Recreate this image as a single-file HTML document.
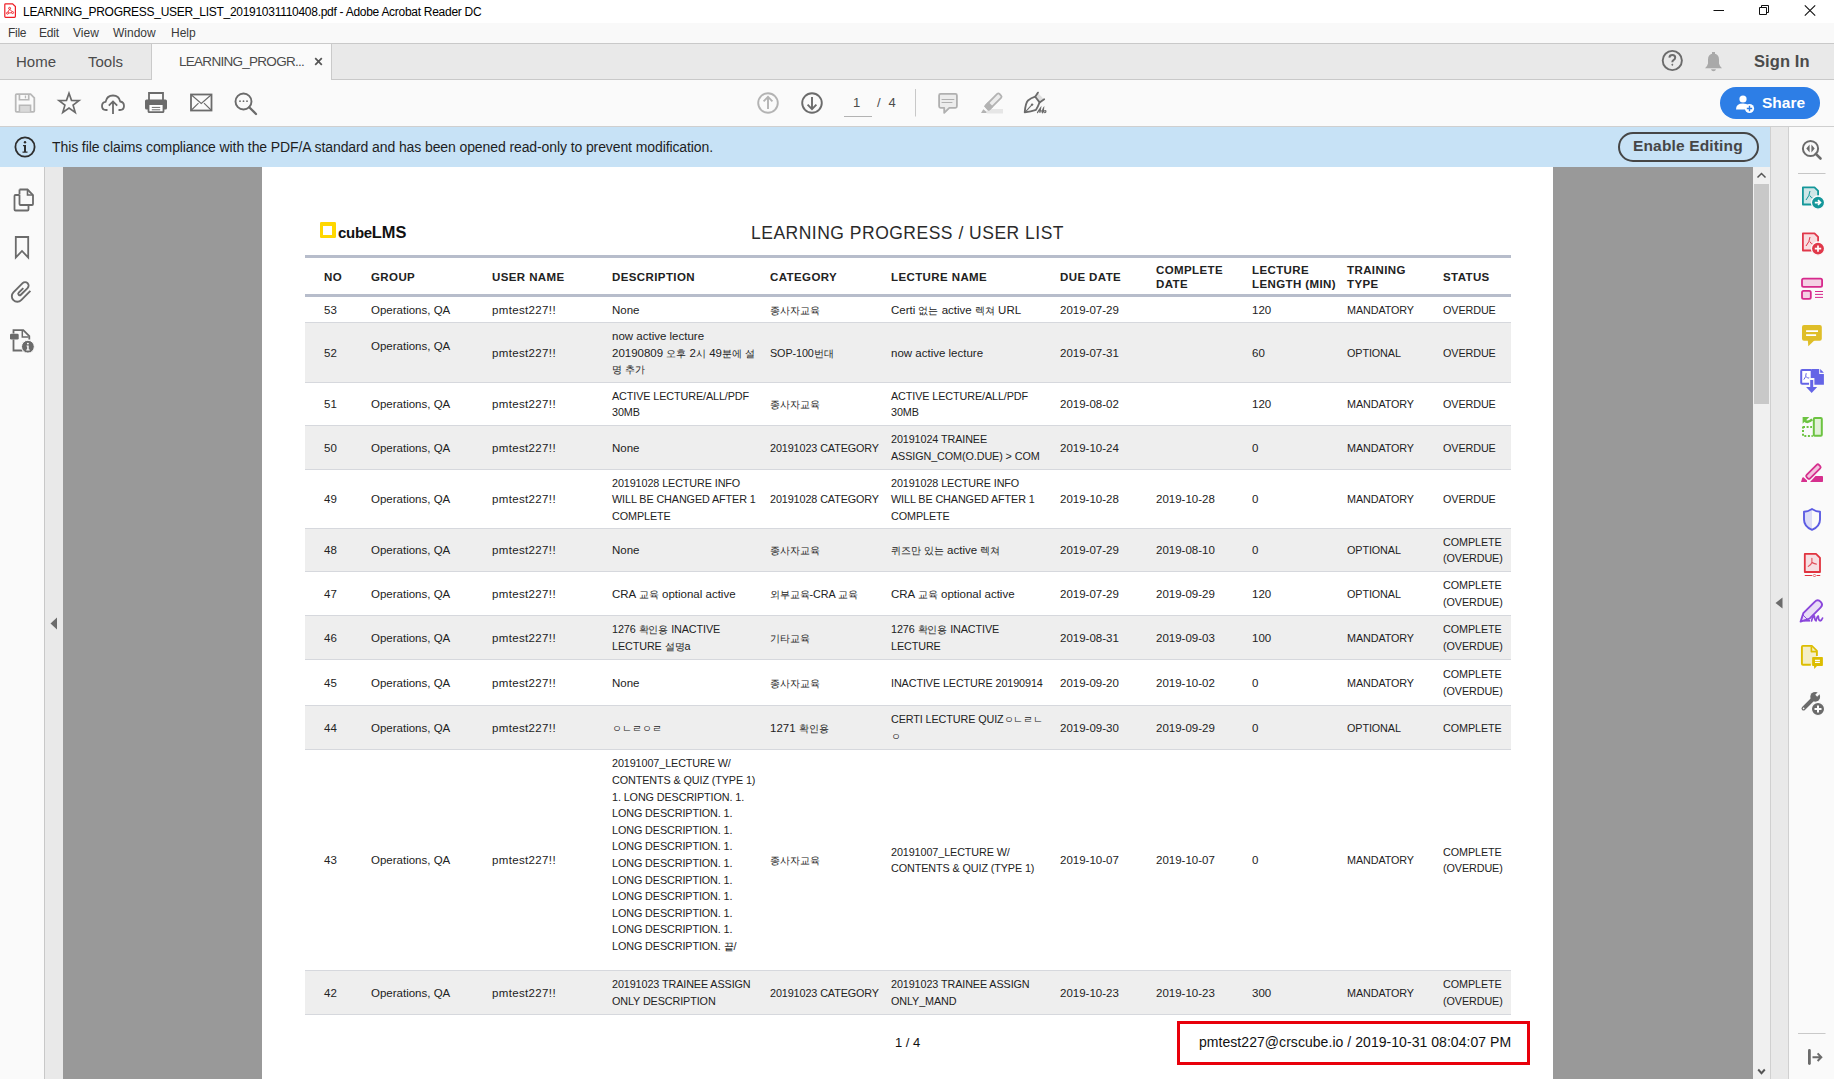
<!DOCTYPE html>
<html><head><meta charset="utf-8">
<style>
*{margin:0;padding:0;box-sizing:border-box}
html,body{width:1834px;height:1079px;overflow:hidden;background:#fafafa;font-family:"Liberation Sans",sans-serif;color:#222}
.abs{position:absolute}
#titlebar{left:0;top:0;width:1834px;height:23px;background:#fff}
#menubar{left:0;top:23px;width:1834px;height:20px;background:#f9f9f9}
#tabbar{left:0;top:43px;width:1834px;height:37px;background:#e9e9e9;border-top:1px solid #c9c9c9;border-bottom:1px solid #c9c9c9}
#toolbar{left:0;top:80px;width:1834px;height:47px;background:#fafafa;border-bottom:1px solid #cfcfcf}
#infobar{left:0;top:127px;width:1770px;height:40px;background:#c7e2f6}
#leftpanel{left:0;top:167px;width:45px;height:912px;background:#fafafa;border-right:1px solid #c8c8c8}
#leftstrip{left:45px;top:167px;width:18px;height:912px;background:#e9e9e9}
#docarea{left:63px;top:167px;width:1690px;height:912px;background:#999}
#page{left:262px;top:167px;width:1291px;height:912px;background:#fff}
#scroll{left:1753px;top:167px;width:17px;height:912px;background:#f0f0f0}
#rightstrip{left:1770px;top:127px;width:19px;height:952px;background:#e9e9e9;border-left:1px solid #d0d0d0;border-right:1px solid #d0d0d0}
#rightpanel{left:1789px;top:127px;width:45px;height:952px;background:#fafafa}
.t{position:absolute;white-space:nowrap}
.ico{position:absolute}
.h{position:absolute;white-space:nowrap;font-size:11.5px;font-weight:bold;color:#222;letter-spacing:0.4px;line-height:14px}
.row{position:absolute;left:305px;width:1206px}
.rl{position:absolute;left:305px;width:1206px;height:1px;background:#d6d8dd}
.c{position:absolute;white-space:nowrap;font-size:11.5px;color:#222;line-height:16.6px}
.u{font-size:10.8px;letter-spacing:-0.1px}
.k{font-size:10.4px;font-weight:500;line-height:1}
.un{letter-spacing:0.35px}
</style></head><body>
<div id="titlebar" class="abs"></div>
<div id="menubar" class="abs"></div>
<div id="tabbar" class="abs"></div>
<div id="toolbar" class="abs"></div>
<div id="infobar" class="abs"></div>
<div id="leftpanel" class="abs"></div>
<div id="leftstrip" class="abs"></div>
<div id="docarea" class="abs"></div>
<div id="page" class="abs"></div>
<div id="scroll" class="abs"></div>
<div id="rightstrip" class="abs"></div>
<div id="rightpanel" class="abs"></div>

<!-- title bar -->
<svg class="ico" style="left:3px;top:2px" width="15" height="18" viewBox="0 0 15 18">
 <path d="M2.6 1.8 H9.6 L12.4 4.6 V14.3 Q12.4 15.3 11.4 15.3 H2.6 Q1.8 15.3 1.8 14.5 V2.6 Q1.8 1.8 2.6 1.8 Z" fill="#fff" stroke="#ee1c24" stroke-width="1.2"/>
 <circle cx="6.6" cy="6.3" r="1" fill="none" stroke="#ee1c24" stroke-width="0.9"/>
 <circle cx="4.5" cy="11.2" r="1" fill="none" stroke="#ee1c24" stroke-width="0.9"/>
 <circle cx="9.6" cy="10.6" r="1" fill="none" stroke="#ee1c24" stroke-width="0.9"/>
 <path d="M6.5 7.3 L4.9 10.2 M6.9 7.3 L9 9.7 M5.5 11 L8.6 10.7" stroke="#ee1c24" stroke-width="0.9"/>
</svg>
<div class="t" style="left:23px;top:5px;font-size:12px;color:#000;letter-spacing:-0.28px">LEARNING_PROGRESS_USER_LIST_20191031110408.pdf - Adobe Acrobat Reader DC</div>
<svg class="ico" style="left:1700px;top:0" width="134" height="22" viewBox="0 0 134 22">
 <path d="M13.5 10.5 H24" stroke="#111" stroke-width="1"/>
 <path d="M59.5 7.5 H66.5 V14.5 H59.5 Z M61.5 7.5 V5.5 H68.5 V12.5 H66.5" fill="none" stroke="#111" stroke-width="1"/>
 <path d="M104.8 5.3 L115.2 15.7 M115.2 5.3 L104.8 15.7" stroke="#111" stroke-width="1.1"/>
</svg>
<!-- menu -->
<div class="t" style="left:8px;top:26px;font-size:12px;color:#3a3a3a;letter-spacing:-0.3px">File</div>
<div class="t" style="left:39px;top:26px;font-size:12px;color:#3a3a3a;letter-spacing:-0.2px">Edit</div>
<div class="t" style="left:73px;top:26px;font-size:12px;color:#3a3a3a">View</div>
<div class="t" style="left:113px;top:26px;font-size:12px;color:#3a3a3a">Window</div>
<div class="t" style="left:171px;top:26px;font-size:12px;color:#3a3a3a">Help</div>
<!-- tabs -->
<div class="t" style="left:16px;top:53px;font-size:15px;color:#4b4b4b">Home</div>
<div class="t" style="left:88px;top:53px;font-size:15px;color:#4b4b4b">Tools</div>
<div class="abs" style="left:151px;top:43px;width:181px;height:37px;background:#fafafa;border-left:1px solid #cacaca;border-right:1px solid #cacaca;border-top:1px solid #cacaca"></div>
<div class="t" style="left:179px;top:54px;font-size:13.5px;color:#4b4b4b;letter-spacing:-0.72px">LEARNING_PROGR...</div>
<svg class="ico" style="left:314px;top:57px" width="9" height="9" viewBox="0 0 9 9"><path d="M1.2 1.2 L7.8 7.8 M7.8 1.2 L1.2 7.8" stroke="#555" stroke-width="1.7"/></svg>
<svg class="ico" style="left:1661px;top:49px" width="23" height="23" viewBox="0 0 23 23">
 <circle cx="11.3" cy="11.5" r="9.6" fill="none" stroke="#6b6b6b" stroke-width="1.9"/>
 <path d="M8.4 8.6 Q8.6 6.1 11.4 6.1 Q14.2 6.1 14.2 8.6 Q14.2 10.2 12.5 11.1 Q11.3 11.8 11.3 13.3" fill="none" stroke="#6b6b6b" stroke-width="2"/>
 <path d="M11.3 14.6 L12.4 15.8 L11.3 17 L10.2 15.8 Z" fill="#6b6b6b"/>
</svg>
<svg class="ico" style="left:1703px;top:50px" width="21" height="23" viewBox="0 0 21 23">
 <rect x="9" y="2" width="3" height="3" fill="#a9a9a9"/>
 <path d="M10.5 3.8 Q16 3.8 16 9.5 V13.5 Q16.5 16 19 18.2 H2 Q4.5 16 5 13.5 V9.5 Q5 3.8 10.5 3.8 Z" fill="#a9a9a9"/>
 <path d="M8 19.2 H13 Q12.5 21.2 10.5 21.2 Q8.5 21.2 8 19.2 Z" fill="#a9a9a9"/>
</svg>
<div class="t" style="left:1754px;top:52px;font-size:16.5px;color:#4b4b4b;font-weight:bold;letter-spacing:0.1px">Sign In</div>
<!-- toolbar icons -->
<svg class="ico" style="left:0;top:80px" width="280" height="46" viewBox="0 0 280 46">
 <!-- save (disabled) -->
 <g transform="translate(25,23) scale(0.93) translate(-25,-23.5)">
 <path d="M16 14 H31 L35 18 V32 Q35 33 34 33 H16 Q15 33 15 32 V15 Q15 14 16 14 Z" fill="none" stroke="#b8b8b8" stroke-width="1.9"/>
 <path d="M19 14 V20 H29 V14" fill="none" stroke="#b8b8b8" stroke-width="1.8"/>
 <path d="M25.5 15.5 V18.5" stroke="#b8b8b8" stroke-width="1.4"/>
 <path d="M19 33 V26 H31 V33" fill="#d9d9d9" stroke="#b8b8b8" stroke-width="1.7"/>
 </g>
 <!-- star -->
 <path d="M69 12.5 L71.7 20.2 L79.8 20.4 L73.4 25.3 L75.7 33.1 L69 28.5 L62.3 33.1 L64.6 25.3 L58.2 20.4 L66.3 20.2 Z" fill="none" stroke="#6b6b6b" stroke-width="1.8" stroke-linejoin="miter" transform="translate(69,23) scale(0.93) translate(-69,-23)"/>
 <!-- cloud upload -->
 <path d="M107.5 30 H106 Q102 30 102 26 Q102 22.3 105.6 21.8 Q106.8 15.5 113 15.5 Q119 15.5 120.2 21.5 Q124 22 124 26 Q124 30 120 30 H118.5" fill="none" stroke="#6b6b6b" stroke-width="1.8"/>
 <path d="M113 34 V21.5 M108.8 25.6 L113 21.4 L117.2 25.6" fill="none" stroke="#6b6b6b" stroke-width="1.8"/>
 <!-- print -->
 <path d="M149 20 V13 H163 V20" fill="none" stroke="#6b6b6b" stroke-width="1.8"/>
 <rect x="145" y="19.5" width="22" height="10" rx="1.5" fill="#6b6b6b"/>
 <rect x="148.5" y="24.2" width="15" height="8" rx="0.8" fill="#fff" stroke="#6b6b6b" stroke-width="1.8"/>
 <path d="M151.8 27.4 H160.2 M151.8 29.8 H160.2" stroke="#6b6b6b" stroke-width="1"/>
 <!-- mail -->
 <rect x="191" y="14.5" width="20.5" height="16" fill="none" stroke="#6b6b6b" stroke-width="1.8"/>
 <path d="M191.5 15 L201.25 23.5 L211 15 M191.5 30 L198.5 23.2 M211 30 L204 23.2" fill="none" stroke="#6b6b6b" stroke-width="1.1"/>
 <!-- search -->
 <circle cx="243.5" cy="21.5" r="8" fill="none" stroke="#6b6b6b" stroke-width="1.9"/>
 <path d="M249.2 27.2 L256 34" stroke="#6b6b6b" stroke-width="2.3" stroke-linecap="round"/>
 <circle cx="240" cy="21.2" r="0.9" fill="#6b6b6b"/><circle cx="243.5" cy="21.2" r="0.9" fill="#6b6b6b"/><circle cx="247" cy="21.2" r="0.9" fill="#6b6b6b"/>
</svg>
<!-- nav -->
<svg class="ico" style="left:740px;top:80px" width="320" height="46" viewBox="0 0 320 46">
 <circle cx="28" cy="23" r="9.8" fill="none" stroke="#b3b3b3" stroke-width="1.9"/>
 <path d="M28 29 V17 M23.6 21.3 L28 16.9 L32.4 21.3" fill="none" stroke="#b3b3b3" stroke-width="1.9"/>
 <circle cx="72" cy="23" r="9.8" fill="none" stroke="#6b6b6b" stroke-width="1.9"/>
 <path d="M72 17 V29 M67.6 24.7 L72 29.1 L76.4 24.7" fill="none" stroke="#6b6b6b" stroke-width="1.9"/>
 <path d="M104 36.5 H132" stroke="#b3b3b3" stroke-width="1"/>
 <path d="M175.5 9 V36.5" stroke="#c8c8c8" stroke-width="1"/>
 <!-- comment -->
 <path d="M200.6 13.9 H215.4 Q216.9 13.9 216.9 15.4 V26.3 Q216.9 27.8 215.4 27.8 H209.3 L204.2 32.9 V27.8 H200.6 Q199.1 27.8 199.1 26.3 V15.4 Q199.1 13.9 200.6 13.9 Z" fill="#ececec" stroke="#b0b0b0" stroke-width="1.8" stroke-linejoin="round"/>
 <path d="M202 19.5 H213.9 M202 22.5 H212" stroke="#b0b0b0" stroke-width="1.1" stroke-linecap="round"/>
 <!-- highlighter -->
 <rect x="246.8" y="29" width="16.2" height="4.5" fill="#e6e6e6"/>
 <g transform="translate(253.6,21.4) rotate(45)">
  <rect x="-2.7" y="-9.4" width="5.4" height="18.8" rx="1.6" fill="#ececec" stroke="#b3b3b3" stroke-width="1.8"/>
  <rect x="-3.5" y="4" width="7" height="6.2" fill="#b3b3b3"/>
 </g>
 <path d="M241 33 L243.3 29.2 L246.8 32 L246.2 33 Z" fill="#b3b3b3"/>
 <!-- sign -->
 <path d="M297.8 12.8 L303.9 19.3 L299.6 22.4 L295.2 16.7 Z" fill="#dedede"/>
 <path d="M284.7 32.4 Q285.5 23 288 20.5 Q291 18 295.2 16.7 L299.6 22.4 Q297.8 27 296 29.8 Q291 31.5 284.7 32.4 Z" fill="none" stroke="#6b6b6b" stroke-width="1.8" stroke-linejoin="round"/>
 <path d="M295.2 16.7 L298 12.6 M299.6 22.4 L304.2 19.2" stroke="#6b6b6b" stroke-width="1.8" stroke-linecap="round"/>
 <path d="M285.6 31.6 L292.1 24.6" stroke="#6b6b6b" stroke-width="1.1"/>
 <circle cx="292.1" cy="24.6" r="1.2" fill="#6b6b6b"/>
 <path d="M297.5 32.6 Q299.2 29.5 300.6 27.8 L299.9 32.4 M299 30.8 H301.4 M302.2 32.4 Q302.6 29 303.6 27.8 L303.2 32 Q304.5 30.2 305.8 30.8 Q306.2 32.6 304.6 32.6" fill="none" stroke="#6b6b6b" stroke-width="1.2" stroke-linecap="round"/>
</svg>
<div class="t" style="left:853px;top:95px;font-size:13px;color:#4b4b4b">1</div>
<div class="t" style="left:877px;top:95px;font-size:13px;color:#4b4b4b;letter-spacing:2.2px">/ 4</div>
<!-- share button -->
<div class="abs" style="left:1720px;top:87px;width:100px;height:32px;background:#2d7ee6;border-radius:16px"></div>
<svg class="ico" style="left:1735px;top:94px" width="22" height="20" viewBox="0 0 22 20">
 <circle cx="8" cy="5" r="3.6" fill="#fff"/>
 <path d="M1 15.5 Q1 9.6 8 9.6 Q12 9.6 13.6 11.5 Q11 13 11 15.5 Z" fill="#fff"/>
 <circle cx="14.5" cy="14.5" r="4.6" fill="#fff"/>
 <path d="M14.5 11.8 V17.2 M11.8 14.5 H17.2" stroke="#2d7ee6" stroke-width="1.4"/>
</svg>
<div class="t" style="left:1762px;top:94px;font-size:15.5px;color:#fff;font-weight:bold">Share</div>
<!-- info bar -->
<svg class="ico" style="left:14px;top:136px" width="23" height="23" viewBox="0 0 23 23">
 <circle cx="11" cy="11" r="9.6" fill="none" stroke="#2e2e2e" stroke-width="1.8"/>
 <circle cx="11" cy="6.3" r="1.2" fill="#2e2e2e"/>
 <path d="M9 9 H12 V15.6 H13.5 V16.8 H8.5 V15.6 H10 V10.2 H9 Z" fill="#2e2e2e"/>
</svg>
<div class="t" style="left:52px;top:139px;font-size:14px;color:#1e1e1e;letter-spacing:-0.1px">This file claims compliance with the PDF/A standard and has been opened read-only to prevent modification.</div>
<div class="abs" style="left:1618px;top:132px;width:141px;height:30px;border:2.4px solid #464646;border-radius:15px"></div>
<div class="t" style="left:1633px;top:137px;font-size:15.5px;color:#464646;font-weight:bold;letter-spacing:0.15px">Enable Editing</div>
<!-- left panel icons -->
<svg class="ico" style="left:0;top:167px" width="45" height="200" viewBox="0 0 45 200">
 <!-- pages -->
 <path d="M19.5 22.5 V27.5 M19.5 22.5 H27.5 L33 28 V37 Q33 38 32 38 H20.5 Q19.5 38 19.5 37 V28" fill="none" stroke="#6b6b6b" stroke-width="1.8"/>
 <path d="M27.5 22.5 V28 H33" fill="none" stroke="#6b6b6b" stroke-width="1.6"/>
 <path d="M19.5 28 H15.5 Q14.5 28 14.5 29 V42.5 Q14.5 43.5 15.5 43.5 H27.5 Q28.5 43.5 28.5 42.5 V38" fill="none" stroke="#6b6b6b" stroke-width="1.8"/>
 <!-- bookmark -->
 <path d="M15.8 70 H28.2 V90.5 L22 84 L15.8 90.5 Z" fill="none" stroke="#6b6b6b" stroke-width="1.8" stroke-linejoin="miter"/>
 <!-- paperclip -->
 <path d="M6 -7 V6 A5.5 5.5 0 0 1 -5 6 V-7 A3.5 3.5 0 0 1 2 -7 V2.5 A1.5 1.5 0 0 1 -1 2.5 V-4" fill="none" stroke="#6b6b6b" stroke-width="1.9" transform="translate(21.2,124.6) rotate(45)"/>
 <!-- doc info -->
 <path d="M13.5 166.5 V163.2 H23.3 L29.3 169.2 V172.5" fill="none" stroke="#6b6b6b" stroke-width="1.8"/>
 <path d="M22.3 164 V170 H28.5" fill="none" stroke="#6b6b6b" stroke-width="1.5"/>
 <path d="M13.5 172.5 V183.5 H22.5" fill="none" stroke="#6b6b6b" stroke-width="1.8"/>
 <rect x="10" y="166.7" width="8.7" height="5.9" rx="1.3" fill="#6b6b6b"/>
 <circle cx="27.9" cy="179.7" r="6.4" fill="#6b6b6b" stroke="#fafafa" stroke-width="1"/>
 <circle cx="27.9" cy="176.6" r="0.95" fill="#fff"/>
 <path d="M26.6 178.5 H28.7 V182.6 H29.7 V183.5 H26.2 V182.6 H27.2 V179.4 H26.6 Z" fill="#fff"/>
</svg>
<svg class="ico" style="left:50px;top:617px" width="8" height="13" viewBox="0 0 8 13"><path d="M7 0.5 V12.5 L0.5 6.5 Z" fill="#6b6b6b"/></svg>
<!-- scrollbar -->
<div class="abs" style="left:1754px;top:184px;width:15px;height:220px;background:#c8c8c8"></div>
<svg class="ico" style="left:1756px;top:171px" width="11" height="9" viewBox="0 0 11 9"><path d="M1.5 6.5 L5.5 2.5 L9.5 6.5" fill="none" stroke="#555" stroke-width="1.5"/></svg>
<svg class="ico" style="left:1756px;top:1066px" width="11" height="11" viewBox="0 0 11 11"><path d="M2.2 3.5 L5.5 7.2 L8.8 3.5" fill="none" stroke="#555" stroke-width="1.9"/></svg>
<svg class="ico" style="left:1775px;top:597px" width="8" height="12" viewBox="0 0 8 12"><path d="M7.5 0.5 V11.5 L0.5 6 Z" fill="#6b6b6b"/></svg>
<!-- right panel icons -->
<svg class="ico" style="left:1789px;top:126px" width="45" height="953" viewBox="0 0 45 953">
 <!-- zoom/compare -->
 <circle cx="21.5" cy="22.5" r="7.6" fill="none" stroke="#6b6b6b" stroke-width="2"/>
 <path d="M26.8 27.8 L31.5 32.5" stroke="#6b6b6b" stroke-width="2.6" stroke-linecap="round"/>
 <path d="M20.6 18.5 L17.3 22.5 L20.6 26.5 Z M22.4 18.5 L25.7 22.5 L22.4 26.5 Z" fill="#6b6b6b"/>
 <path d="M9 47.5 H36.5" stroke="#c6c6c6" stroke-width="1"/>
 <!-- create pdf (teal) -->
 <path d="M13.9 61.3 H25.5 L29.1 64.9 V78.5 H13.9 Z" fill="#cfe6e7" stroke="#14979a" stroke-width="1.8" stroke-linejoin="round"/>
 <path d="M21 65 Q20.5 70 17 74 M20.8 69.5 Q22 72 25 73" fill="none" stroke="#14979a" stroke-width="1"/>
 <circle cx="29" cy="76.6" r="6.6" fill="#14979a" stroke="#fafafa" stroke-width="1.3"/>
 <path d="M25.8 76.6 H31.2 M29 74.2 L31.5 76.6 L29 79" fill="none" stroke="#fff" stroke-width="1.6"/>
 <!-- edit pdf (red) -->
 <path d="M13.9 107.3 H25.5 L29.1 110.9 V124.5 H13.9 Z" fill="#f9dde0" stroke="#e0384a" stroke-width="1.8" stroke-linejoin="round"/>
 <path d="M21 111 Q20.5 116 17 120 M20.8 115.5 Q22 118 25 119" fill="none" stroke="#e0384a" stroke-width="1"/>
 <circle cx="29" cy="122.6" r="6.6" fill="#e0384a" stroke="#fafafa" stroke-width="1.3"/>
 <path d="M25.8 122.6 H32.2 M29 119.4 V125.8" stroke="#fff" stroke-width="1.7"/>
 <!-- organize (pink) -->
 <rect x="13" y="152.7" width="20.1" height="8.2" rx="1.6" fill="#f4d0e4" stroke="#d6298c" stroke-width="1.8"/>
 <rect x="13" y="164.9" width="8.8" height="7.9" rx="1.6" fill="#f4d0e4" stroke="#d6298c" stroke-width="1.8"/>
 <path d="M26 165.5 H34 M26 168.4 H34 M26 171.4 H34" stroke="#d6298c" stroke-width="1"/>
 <!-- comment (yellow) -->
 <rect x="13" y="199" width="19.8" height="15.8" rx="2" fill="#dfbe28"/>
 <path d="M18.8 214 L19.3 220.2 L25.8 214 Z" fill="#dfbe28"/>
 <path d="M17.1 205.2 H29 M17.1 209.1 H27.1" stroke="#fff" stroke-width="1.7"/>
 <!-- export (purple) -->
 <path d="M22.7 242.9 H30.2 V248 H34.9 V258.8 H22.7 Z" fill="#6464e6"/>
 <path d="M31.2 242.9 L34.9 246.8 H31.2 Z" fill="#6464e6"/>
 <rect x="12.2" y="243.9" width="10.5" height="13.9" rx="1" fill="#fff" stroke="#6464e6" stroke-width="2"/>
 <path d="M17.2 247.2 Q17.2 251 14.8 253.6 M17.1 250.8 Q18.6 252.2 20.6 252.2" fill="none" stroke="#6464e6" stroke-width="1"/>
 <rect x="20" y="252" width="5.4" height="8" fill="#fafafa"/>
 <rect x="21.2" y="254" width="3" height="8" fill="#6464e6"/>
 <path d="M17.1 261 H28.2 L22.65 267 Z" fill="#6464e6"/>
 <!-- compress/green -->
 <rect x="24.8" y="292.1" width="8" height="17.6" rx="1" fill="#e2f1d8" stroke="#6cc341" stroke-width="2"/>
 <path d="M14 300.5 V310 H23.8 M14 301 H23" fill="none" stroke="#6cc341" stroke-width="2" stroke-dasharray="2 1.6"/>
 <path d="M13.6 291 H20.3 L13.6 297.7 Z" fill="#6cc341"/>
 <path d="M15.8 294.6 Q18.6 297.6 23.2 293.4" fill="none" stroke="#6cc341" stroke-width="2.6"/>
 <!-- fill & sign pink -->
 <rect x="-2.45" y="-8.7" width="4.9" height="17.4" rx="1.6" fill="#f3c5de" stroke="#d6308e" stroke-width="1.8" transform="translate(24.4,345.6) rotate(45)"/>
 <path d="M26.5 350 H33.2 Q34 350 34 350.8 V355.2 Q34 356 33.2 356 H21 Z" fill="#d6308e"/>
 <path d="M12 356 L13.2 352 Q13.8 351 14.8 351.5 L18 354.5 V356 Z" fill="#d6308e"/>
 <!-- protect shield -->
 <path d="M23 383.5 Q19 386 15.5 386.2 V393.5 Q15.5 400 23 403.4 Z" fill="#dcdcf7"/>
 <path d="M23 383 Q27 385.6 31 385.8 V393.5 Q31 400.5 23 403.9 Q15 400.5 15 393.5 V385.8 Q19 385.6 23 383 Z" fill="none" stroke="#5b5be3" stroke-width="1.9" stroke-linejoin="round"/>
 <!-- red pdf -->
 <path d="M15.8 427.9 H27 L31 431.9 V446 H15.8 Z" fill="#f6dfe2" stroke="#e0333f" stroke-width="1.8" stroke-linejoin="round"/>
 <path d="M22.9 432.3 V436.3 Q22.5 438.3 19.3 440.4 M22.9 436.3 Q24.5 437.6 27.4 438.1" fill="none" stroke="#e2505b" stroke-width="1.1" stroke-linecap="round"/>
 <path d="M16.2 449.5 H22.6 M28.2 449.5 H30.8" stroke="#e0333f" stroke-width="1.1" stroke-linecap="round"/>
 <path d="M25.5 448 L27 449.5 L25.5 451 L24 449.5 Z" fill="none" stroke="#e0333f" stroke-width="0.8"/>
 <!-- purple sign -->
 <path d="M11.6 495.6 L14.3 487.2 L25.7 475.8 Q28.7 472.8 31.7 475.8 Q34.5 478.6 31.5 481.6 L20.5 492.6 Z" fill="#e8dcf6" stroke="#8a46db" stroke-width="1.9" stroke-linejoin="round"/>
 <path d="M14 489 L19 494" stroke="#8a46db" stroke-width="1"/>
 <path d="M14.5 494.8 L21 494.8" stroke="#8a46db" stroke-width="1.6"/>
 <path d="M22.5 495 Q24 489.5 25.4 490 Q25.6 494.2 27 494.8 Q28.2 490 29.3 490.2 Q29.4 494.2 31 494.8 Q32.8 494.5 33.6 492" fill="none" stroke="#8a46db" stroke-width="1.7" stroke-linecap="round" stroke-linejoin="round"/>
 <!-- doc comment yellow -->
 <path d="M12.9 519.9 H22.8 L27.9 525 V531 H23.1 V538.8 H12.9 Z" fill="#f4eec6"/>
 <path d="M21.8 538.8 H13.9 Q12.9 538.8 12.9 537.8 V520.9 Q12.9 519.9 13.9 519.9 H22.8 L27.9 525 V530" fill="none" stroke="#dcbd00" stroke-width="1.9" stroke-linejoin="round"/>
 <path d="M22.4 520.5 V525.6 H27.4" fill="#f4eec6" stroke="#dcbd00" stroke-width="1.7" stroke-linejoin="round"/>
 <rect x="23.1" y="531" width="10.8" height="9" rx="0.8" fill="#dcbd00"/>
 <path d="M24.9 539.5 L25.3 543 L28.4 539.5 Z" fill="#dcbd00"/>
 <path d="M26 534.4 H30.9 M26 536.4 H30.9" stroke="#fff" stroke-width="1.1"/>
 <!-- wrench + plus -->
 <g transform="translate(26.2,570.8) rotate(45)">
  <circle cx="0" cy="0" r="4.9" fill="#6b6b6b"/>
  <rect x="-2" y="0" width="4" height="18.5" rx="2" fill="#6b6b6b"/>
  <rect x="-1.35" y="-6" width="2.7" height="4.6" fill="#fafafa"/>
  <circle cx="0" cy="16.4" r="0.85" fill="#fafafa"/>
 </g>
 <circle cx="29" cy="582.9" r="6.6" fill="#6b6b6b" stroke="#fafafa" stroke-width="1.2"/>
 <path d="M29 579.4 V586.4 M25.5 582.9 H32.5" stroke="#fff" stroke-width="2"/>
 <!-- bottom -->
 <path d="M9 907.5 H36.5" stroke="#c9c9c9" stroke-width="1"/>
 <path d="M20.4 924.5 V937.5" stroke="#6b6b6b" stroke-width="2.8" stroke-linecap="round"/>
 <path d="M23.5 931.2 H32 M28.6 927.4 L32.3 931.2 L28.6 935" fill="none" stroke="#6b6b6b" stroke-width="2"/>
</svg>
<!-- PAGE CONTENT -->
<div class="abs" style="left:319.6px;top:222.2px;width:16px;height:16px;background:#ffd700;border-radius:1.2px"></div>
<div class="abs" style="left:323px;top:225.9px;width:9.2px;height:9px;background:#fff"></div>
<div class="t" style="left:338px;top:223px;font-size:15px;font-weight:bold;color:#111;letter-spacing:-0.3px">cube<span style="font-size:16.4px;letter-spacing:0">LMS</span></div>
<div class="t" style="left:751px;top:223px;font-size:17.5px;color:#2a2a2a;letter-spacing:0.5px">LEARNING PROGRESS / USER LIST</div>
<div class="abs" style="left:305px;top:255px;width:1206px;height:3px;background:#b7bdcb"></div>
<div class="abs" style="left:305px;top:294px;width:1206px;height:3px;background:#b7bdcb"></div>
<div class="h" style="left:324px;top:270px">NO</div>
<div class="h" style="left:371px;top:270px">GROUP</div>
<div class="h" style="left:492px;top:270px">USER NAME</div>
<div class="h" style="left:612px;top:270px">DESCRIPTION</div>
<div class="h" style="left:770px;top:270px">CATEGORY</div>
<div class="h" style="left:891px;top:270px">LECTURE NAME</div>
<div class="h" style="left:1060px;top:270px">DUE DATE</div>
<div class="h" style="left:1156px;top:263px">COMPLETE<br>DATE</div>
<div class="h" style="left:1252px;top:263px">LECTURE<br>LENGTH (MIN)</div>
<div class="h" style="left:1347px;top:263px">TRAINING<br>TYPE</div>
<div class="h" style="left:1443px;top:270px">STATUS</div>
<div class="row" style="top:297px;height:25px;background:#fff"></div>
<div class="rl" style="top:322px"></div>
<div class="c" style="left:324px;top:301.7px">53</div>
<div class="c" style="left:371px;top:301.7px">Operations, QA</div>
<div class="c un" style="left:492px;top:301.7px">pmtest227!!</div>
<div class="c" style="left:612px;top:301.7px">None</div>
<div class="c" style="left:770px;top:301.7px"><span class="k">종사자교육</span></div>
<div class="c" style="left:891px;top:301.7px">Certi <span class="k">없는</span> active <span class="k">렉쳐</span> URL</div>
<div class="c" style="left:1060px;top:301.7px">2019-07-29</div>
<div class="c" style="left:1252px;top:301.7px">120</div>
<div class="c u" style="left:1347px;top:301.7px">MANDATORY</div>
<div class="c u" style="left:1443px;top:301.7px">OVERDUE</div>
<div class="row" style="top:323px;height:59px;background:#eeeeee"></div>
<div class="rl" style="top:382px"></div>
<div class="c" style="left:324px;top:344.7px">52</div>
<div class="c" style="left:371px;top:337.9px">Operations, QA</div>
<div class="c un" style="left:492px;top:344.7px">pmtest227!!</div>
<div class="c" style="left:612px;top:328.1px">now active lecture<br>20190809 <span class="k">오후</span> 2<span class="k">시</span> 49<span class="k">분에 설</span><br><span class="k">명 추가</span></div>
<div class="c u" style="left:770px;top:344.7px">SOP-100<span class="k">번대</span></div>
<div class="c" style="left:891px;top:344.7px">now active lecture</div>
<div class="c" style="left:1060px;top:344.7px">2019-07-31</div>
<div class="c" style="left:1252px;top:344.7px">60</div>
<div class="c u" style="left:1347px;top:344.7px">OPTIONAL</div>
<div class="c u" style="left:1443px;top:344.7px">OVERDUE</div>
<div class="row" style="top:383px;height:42px;background:#fff"></div>
<div class="rl" style="top:425px"></div>
<div class="c" style="left:324px;top:396.2px">51</div>
<div class="c" style="left:371px;top:396.2px">Operations, QA</div>
<div class="c un" style="left:492px;top:396.2px">pmtest227!!</div>
<div class="c u" style="left:612px;top:387.9px">ACTIVE LECTURE/ALL/PDF<br>30MB</div>
<div class="c" style="left:770px;top:396.2px"><span class="k">종사자교육</span></div>
<div class="c u" style="left:891px;top:387.9px">ACTIVE LECTURE/ALL/PDF<br>30MB</div>
<div class="c" style="left:1060px;top:396.2px">2019-08-02</div>
<div class="c" style="left:1252px;top:396.2px">120</div>
<div class="c u" style="left:1347px;top:396.2px">MANDATORY</div>
<div class="c u" style="left:1443px;top:396.2px">OVERDUE</div>
<div class="row" style="top:426px;height:43px;background:#eeeeee"></div>
<div class="rl" style="top:469px"></div>
<div class="c" style="left:324px;top:439.7px">50</div>
<div class="c" style="left:371px;top:439.7px">Operations, QA</div>
<div class="c un" style="left:492px;top:439.7px">pmtest227!!</div>
<div class="c" style="left:612px;top:439.7px">None</div>
<div class="c u" style="left:770px;top:439.7px">20191023 CATEGORY</div>
<div class="c u" style="left:891px;top:431.4px">20191024 TRAINEE<br>ASSIGN_COM(O.DUE) &gt; COM</div>
<div class="c" style="left:1060px;top:439.7px">2019-10-24</div>
<div class="c" style="left:1252px;top:439.7px">0</div>
<div class="c u" style="left:1347px;top:439.7px">MANDATORY</div>
<div class="c u" style="left:1443px;top:439.7px">OVERDUE</div>
<div class="row" style="top:470px;height:58px;background:#fff"></div>
<div class="rl" style="top:528px"></div>
<div class="c" style="left:324px;top:491.2px">49</div>
<div class="c" style="left:371px;top:491.2px">Operations, QA</div>
<div class="c un" style="left:492px;top:491.2px">pmtest227!!</div>
<div class="c u" style="left:612px;top:474.6px">20191028 LECTURE INFO<br>WILL BE CHANGED AFTER 1<br>COMPLETE</div>
<div class="c u" style="left:770px;top:491.2px">20191028 CATEGORY</div>
<div class="c u" style="left:891px;top:474.6px">20191028 LECTURE INFO<br>WILL BE CHANGED AFTER 1<br>COMPLETE</div>
<div class="c" style="left:1060px;top:491.2px">2019-10-28</div>
<div class="c" style="left:1156px;top:491.2px">2019-10-28</div>
<div class="c" style="left:1252px;top:491.2px">0</div>
<div class="c u" style="left:1347px;top:491.2px">MANDATORY</div>
<div class="c u" style="left:1443px;top:491.2px">OVERDUE</div>
<div class="row" style="top:529px;height:42px;background:#eeeeee"></div>
<div class="rl" style="top:571px"></div>
<div class="c" style="left:324px;top:542.2px">48</div>
<div class="c" style="left:371px;top:542.2px">Operations, QA</div>
<div class="c un" style="left:492px;top:542.2px">pmtest227!!</div>
<div class="c" style="left:612px;top:542.2px">None</div>
<div class="c" style="left:770px;top:542.2px"><span class="k">종사자교육</span></div>
<div class="c" style="left:891px;top:542.2px"><span class="k">퀴즈만 있는</span> active <span class="k">렉쳐</span></div>
<div class="c" style="left:1060px;top:542.2px">2019-07-29</div>
<div class="c" style="left:1156px;top:542.2px">2019-08-10</div>
<div class="c" style="left:1252px;top:542.2px">0</div>
<div class="c u" style="left:1347px;top:542.2px">OPTIONAL</div>
<div class="c u" style="left:1443px;top:533.9px">COMPLETE<br>(OVERDUE)</div>
<div class="row" style="top:572px;height:43px;background:#fff"></div>
<div class="rl" style="top:615px"></div>
<div class="c" style="left:324px;top:585.7px">47</div>
<div class="c" style="left:371px;top:585.7px">Operations, QA</div>
<div class="c un" style="left:492px;top:585.7px">pmtest227!!</div>
<div class="c" style="left:612px;top:585.7px">CRA <span class="k">교육</span> optional active</div>
<div class="c u" style="left:770px;top:585.7px"><span class="k">외부교육</span>-CRA <span class="k">교육</span></div>
<div class="c" style="left:891px;top:585.7px">CRA <span class="k">교육</span> optional active</div>
<div class="c" style="left:1060px;top:585.7px">2019-07-29</div>
<div class="c" style="left:1156px;top:585.7px">2019-09-29</div>
<div class="c" style="left:1252px;top:585.7px">120</div>
<div class="c u" style="left:1347px;top:585.7px">OPTIONAL</div>
<div class="c u" style="left:1443px;top:577.4px">COMPLETE<br>(OVERDUE)</div>
<div class="row" style="top:616px;height:43px;background:#eeeeee"></div>
<div class="rl" style="top:659px"></div>
<div class="c" style="left:324px;top:629.7px">46</div>
<div class="c" style="left:371px;top:629.7px">Operations, QA</div>
<div class="c un" style="left:492px;top:629.7px">pmtest227!!</div>
<div class="c u" style="left:612px;top:621.4px">1276 <span class="k">확인용</span> INACTIVE<br>LECTURE <span class="k">설명</span>a</div>
<div class="c" style="left:770px;top:629.7px"><span class="k">기타교육</span></div>
<div class="c u" style="left:891px;top:621.4px">1276 <span class="k">확인용</span> INACTIVE<br>LECTURE</div>
<div class="c" style="left:1060px;top:629.7px">2019-08-31</div>
<div class="c" style="left:1156px;top:629.7px">2019-09-03</div>
<div class="c" style="left:1252px;top:629.7px">100</div>
<div class="c u" style="left:1347px;top:629.7px">MANDATORY</div>
<div class="c u" style="left:1443px;top:621.4px">COMPLETE<br>(OVERDUE)</div>
<div class="row" style="top:660px;height:45px;background:#fff"></div>
<div class="rl" style="top:705px"></div>
<div class="c" style="left:324px;top:674.7px">45</div>
<div class="c" style="left:371px;top:674.7px">Operations, QA</div>
<div class="c un" style="left:492px;top:674.7px">pmtest227!!</div>
<div class="c" style="left:612px;top:674.7px">None</div>
<div class="c" style="left:770px;top:674.7px"><span class="k">종사자교육</span></div>
<div class="c u" style="left:891px;top:674.7px">INACTIVE LECTURE 20190914</div>
<div class="c" style="left:1060px;top:674.7px">2019-09-20</div>
<div class="c" style="left:1156px;top:674.7px">2019-10-02</div>
<div class="c" style="left:1252px;top:674.7px">0</div>
<div class="c u" style="left:1347px;top:674.7px">MANDATORY</div>
<div class="c u" style="left:1443px;top:666.4px">COMPLETE<br>(OVERDUE)</div>
<div class="row" style="top:706px;height:43px;background:#eeeeee"></div>
<div class="rl" style="top:749px"></div>
<div class="c" style="left:324px;top:719.7px">44</div>
<div class="c" style="left:371px;top:719.7px">Operations, QA</div>
<div class="c un" style="left:492px;top:719.7px">pmtest227!!</div>
<div class="c" style="left:612px;top:719.7px"><span class="k">ㅇㄴㄹㅇㄹ</span></div>
<div class="c" style="left:770px;top:719.7px">1271 <span class="k">확인용</span></div>
<div class="c u" style="left:891px;top:711.4px">CERTI LECTURE QUIZ<span class="k">ㅇㄴㄹㄴ</span><br><span class="k">ㅇ</span></div>
<div class="c" style="left:1060px;top:719.7px">2019-09-30</div>
<div class="c" style="left:1156px;top:719.7px">2019-09-29</div>
<div class="c" style="left:1252px;top:719.7px">0</div>
<div class="c u" style="left:1347px;top:719.7px">OPTIONAL</div>
<div class="c u" style="left:1443px;top:719.7px">COMPLETE</div>
<div class="row" style="top:750px;height:220px;background:#fff"></div>
<div class="rl" style="top:970px"></div>
<div class="c" style="left:324px;top:852.2px">43</div>
<div class="c" style="left:371px;top:852.2px">Operations, QA</div>
<div class="c un" style="left:492px;top:852.2px">pmtest227!!</div>
<div class="c u" style="left:612px;top:755.4px">20191007_LECTURE W/<br>CONTENTS &amp; QUIZ (TYPE 1)<br>1. LONG DESCRIPTION. 1.<br>LONG DESCRIPTION. 1.<br>LONG DESCRIPTION. 1.<br>LONG DESCRIPTION. 1.<br>LONG DESCRIPTION. 1.<br>LONG DESCRIPTION. 1.<br>LONG DESCRIPTION. 1.<br>LONG DESCRIPTION. 1.<br>LONG DESCRIPTION. 1.<br>LONG DESCRIPTION. <span class="k">끝</span>/</div>
<div class="c" style="left:770px;top:852.2px"><span class="k">종사자교육</span></div>
<div class="c u" style="left:891px;top:843.9px">20191007_LECTURE W/<br>CONTENTS &amp; QUIZ (TYPE 1)</div>
<div class="c" style="left:1060px;top:852.2px">2019-10-07</div>
<div class="c" style="left:1156px;top:852.2px">2019-10-07</div>
<div class="c" style="left:1252px;top:852.2px">0</div>
<div class="c u" style="left:1347px;top:852.2px">MANDATORY</div>
<div class="c u" style="left:1443px;top:843.9px">COMPLETE<br>(OVERDUE)</div>
<div class="row" style="top:971px;height:43px;background:#eeeeee"></div>
<div class="rl" style="top:1014px"></div>
<div class="c" style="left:324px;top:984.7px">42</div>
<div class="c" style="left:371px;top:984.7px">Operations, QA</div>
<div class="c un" style="left:492px;top:984.7px">pmtest227!!</div>
<div class="c u" style="left:612px;top:976.4px">20191023 TRAINEE ASSIGN<br>ONLY DESCRIPTION</div>
<div class="c u" style="left:770px;top:984.7px">20191023 CATEGORY</div>
<div class="c u" style="left:891px;top:976.4px">20191023 TRAINEE ASSIGN<br>ONLY_MAND</div>
<div class="c" style="left:1060px;top:984.7px">2019-10-23</div>
<div class="c" style="left:1156px;top:984.7px">2019-10-23</div>
<div class="c" style="left:1252px;top:984.7px">300</div>
<div class="c u" style="left:1347px;top:984.7px">MANDATORY</div>
<div class="c u" style="left:1443px;top:976.4px">COMPLETE<br>(OVERDUE)</div>
<div class="t" style="left:895px;top:1035px;font-size:13px;color:#111">1 / 4</div>
<div class="abs" style="left:1177px;top:1021px;width:353px;height:44px;border:3px solid #e8000b"></div>
<div class="t" style="left:1199px;top:1034px;font-size:14px;color:#111;letter-spacing:0.05px">pmtest227@crscube.io / 2019-10-31 08:04:07 PM</div>
</body></html>
